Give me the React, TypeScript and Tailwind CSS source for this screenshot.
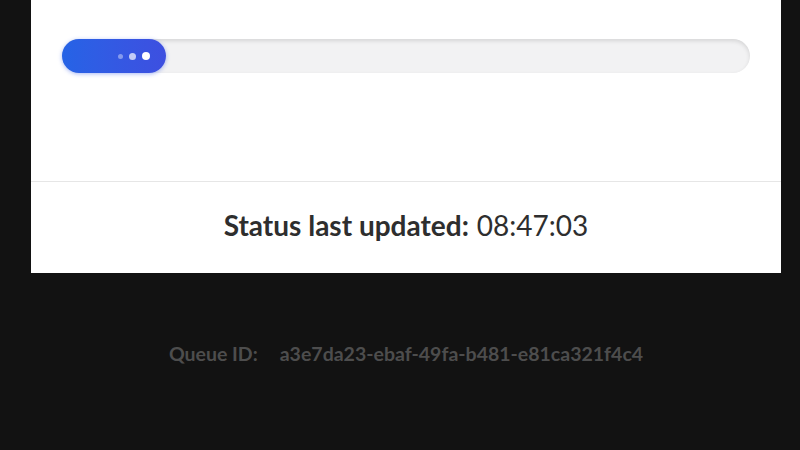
export default function App() {
  return (
    <div
      className="h-[450px] w-[800px] overflow-hidden bg-[#121212]"
      style={{ fontFamily: 'Lato, "Noto Sans", sans-serif' }}
    >
      <div className="ml-[31px] w-[750px] bg-white">
        <div className="h-[181px] px-[31px] pt-[39px]">
          <div className="h-[34px] w-full rounded-full bg-[#f2f2f3] shadow-[inset_0_2px_4px_rgba(0,0,0,0.12)]">
            <div className="flex h-full w-[104px] items-center justify-end gap-[6px] rounded-full bg-gradient-to-r from-[#2563e6] to-[#3d4fe0] pr-[16px] shadow-[0_1px_4px_rgba(40,80,230,0.4)]">
              <span className="h-[5px] w-[5px] rounded-full bg-white/40" />
              <span className="h-[7px] w-[7px] rounded-full bg-white/70" />
              <span className="h-[8px] w-[8px] rounded-full bg-white" />
            </div>
          </div>
        </div>
        <div className="flex h-[92px] items-center justify-center border-t border-[#e6e6e6] pb-[6px] text-[28px] text-[#2e2e2e]">
          <span className="font-bold">Status last updated:</span>
          <span className="ml-[8px]">08:47:03</span>
        </div>
      </div>
      <div className="mt-[66px] flex justify-center pl-[12px] text-[19.5px] font-bold text-[#4d4d4d]">
        <span>Queue ID:</span>
        <span className="ml-[22px]">a3e7da23-ebaf-49fa-b481-e81ca321f4c4</span>
      </div>
    </div>
  )
}
